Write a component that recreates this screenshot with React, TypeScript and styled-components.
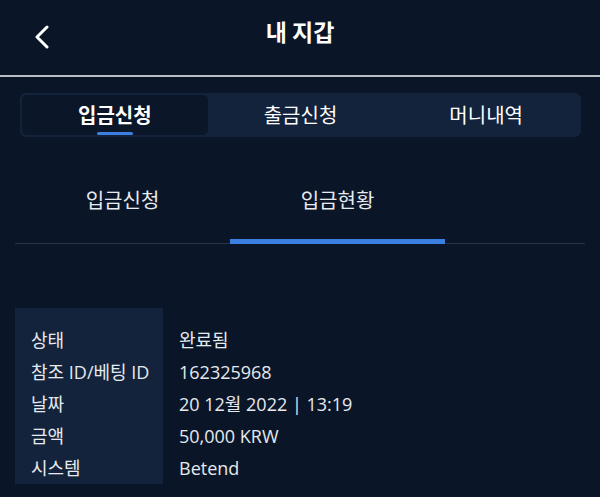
import React, { useState } from "react";
import styled, { createGlobalStyle } from "styled-components";

const GlobalStyle = createGlobalStyle`
  html, body {
    margin: 0;
    padding: 0;
    background: #0a1628;
  }
  body {
    font-family: "Open Sans", "Noto Sans", "Noto Sans CJK KR", sans-serif;
    color: #ffffff;
  }
`;

const Page = styled.div`
  width: 600px;
  height: 497px;
  background: #0a1628;
  overflow: hidden;
`;

const Header = styled.header`
  display: grid;
  grid-template-columns: 84px 1fr 84px;
  align-items: center;
  border-bottom: 2px solid #b9bec6;
  box-sizing: border-box;
  height: 77px;
`;

const BackButton = styled.button`
  background: none;
  border: none;
  padding: 0;
  width: 84px;
  height: 58px;
  display: flex;
  align-items: center;
  justify-content: center;
  cursor: pointer;
  margin-top: -1px;
`;

const Title = styled.h1`
  margin: 0 0 14px;
  text-align: center;
  font-family: "Noto Sans CJK KR", sans-serif;
  font-weight: 700;
  font-size: 23px;
  line-height: 30px;
  color: #ffffff;
`;

const Segment = styled.div`
  margin: 16px 19px 0 20px;
  padding: 2px;
  display: grid;
  grid-template-columns: repeat(3, 1fr);
  background: #13233b;
  border-radius: 6px;
`;

const SegmentTab = styled.div<{ $active?: boolean }>`
  height: 40px;
  box-sizing: border-box;
  padding-top: 7px;
  display: flex;
  flex-direction: column;
  align-items: center;
  gap: 4px;
  border-radius: 5px;
  background: ${(p) => (p.$active ? "#0b1628" : "transparent")};
  font-family: "Noto Sans CJK KR", sans-serif;
  font-size: 20px;
  line-height: 26px;
  font-weight: ${(p) => (p.$active ? 700 : 400)};
  color: #ffffff;
  cursor: pointer;

  &::after {
    content: "";
    display: block;
    width: 36px;
    height: 3px;
    border-radius: 2px;
    background: ${(p) => (p.$active ? "#3b7fe0" : "transparent")};
  }
`;

const SubTabs = styled.div`
  margin: 23px 15px 0;
  display: flex;
  border-bottom: 1px solid #26334a;
`;

const SubTab = styled.div<{ $active?: boolean }>`
  width: 215px;
  height: 84px;
  box-sizing: border-box;
  padding-top: 27px;
  margin-bottom: -1px;
  text-align: center;
  font-family: "Noto Sans CJK KR", sans-serif;
  font-size: 20px;
  line-height: 26px;
  color: #e8ebf0;
  cursor: pointer;
  box-shadow: ${(p) => (p.$active ? "inset 0 -5px 0 #3b7fe0" : "none")};
`;

const InfoTable = styled.dl`
  margin: 64px 0 0 15px;
  display: grid;
  grid-template-columns: 148px 1fr;
`;

const Label = styled.dt`
  background: #13233b;
  padding-left: 16px;
  height: 32px;
  line-height: 32px;
  font-size: 18px;
  color: #e6e9ee;
  white-space: nowrap;
  &:first-of-type {
    padding-top: 16px;
  }
`;

const Value = styled.dd`
  margin: 0;
  padding-left: 16px;
  height: 32px;
  line-height: 32px;
  font-size: 18px;
  color: #e6e9ee;
  &:first-of-type {
    padding-top: 16px;
  }
`;

const ChevronLeft = () => (
  <svg width="16" height="24" viewBox="0 0 16 24" fill="none">
    <path
      d="M13 2 L3 12 L13 22"
      stroke="#ffffff"
      strokeWidth="3"
      strokeLinecap="round"
      strokeLinejoin="round"
    />
  </svg>
);

const rows: [string, string][] = [
  ["상태", "완료됨"],
  ["참조 ID/베팅 ID", "162325968"],
  ["날짜", "20 12월 2022 | 13:19"],
  ["금액", "50,000 KRW"],
  ["시스템", "Betend"],
];

const App: React.FC = () => {
  const [mainTab, setMainTab] = useState(0);
  const [subTab, setSubTab] = useState(1);

  return (
    <Page>
      <GlobalStyle />
      <Header>
        <BackButton aria-label="뒤로">
          <ChevronLeft />
        </BackButton>
        <Title>내 지갑</Title>
        <div />
      </Header>
      <Segment>
        {["입금신청", "출금신청", "머니내역"].map((t, i) => (
          <SegmentTab key={t} $active={mainTab === i} onClick={() => setMainTab(i)}>
            {t}
          </SegmentTab>
        ))}
      </Segment>
      <SubTabs>
        {["입금신청", "입금현황"].map((t, i) => (
          <SubTab key={t} $active={subTab === i} onClick={() => setSubTab(i)}>
            {t}
          </SubTab>
        ))}
      </SubTabs>
      <InfoTable>
        {rows.map(([k, v]) => (
          <React.Fragment key={k}>
            <Label>{k}</Label>
            <Value>{v}</Value>
          </React.Fragment>
        ))}
      </InfoTable>
    </Page>
  );
};

export default App;
